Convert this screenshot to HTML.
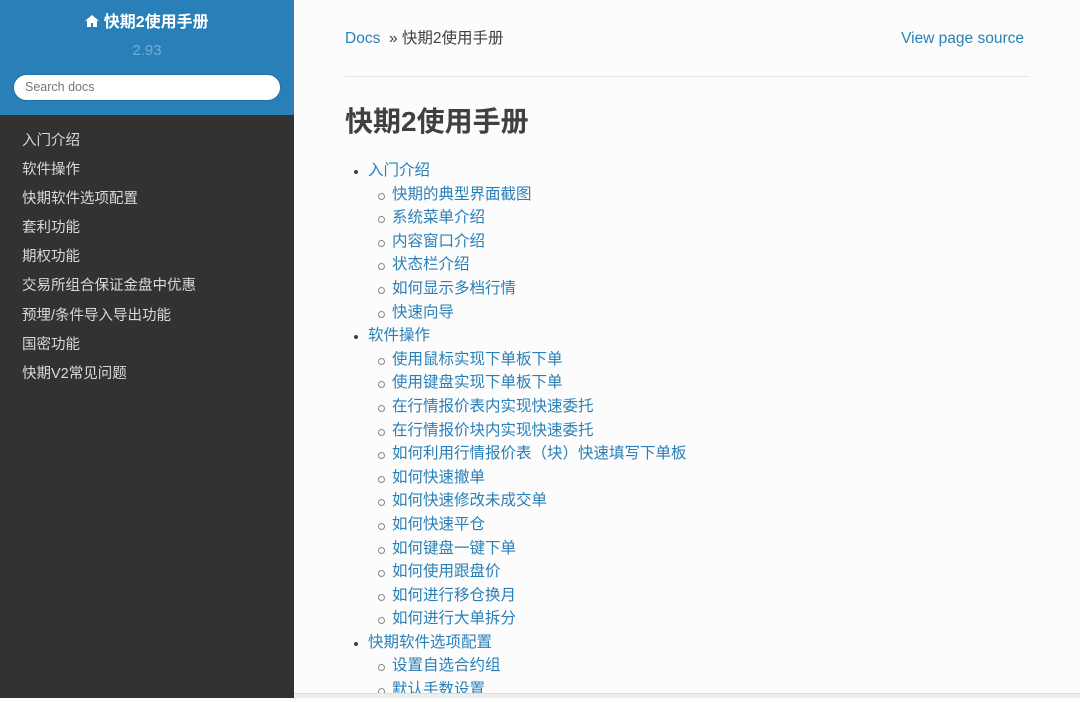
<!DOCTYPE html>
<html><head><meta charset="utf-8"><style>
*{margin:0;padding:0;box-sizing:border-box}
body{width:1080px;height:698px;overflow:hidden;background:#fcfcfc;font-family:"Liberation Sans","Noto Sans CJK SC",sans-serif;position:relative}
.side{position:absolute;left:0;top:0;width:294px;height:698px;background:#343131}
.top{height:115px;background:#2980b9;text-align:center;padding-top:12px}
.top .t{color:#fff;font-weight:bold;font-size:16px;line-height:22px}
.top .v{color:rgba(255,255,255,.35);font-size:15px;margin-top:8px;line-height:18px}
.search{margin:14px 13px 0;height:27px;border-radius:14px;background:#fff;border:1px solid #2472a4;text-align:left;padding-left:11px;font-size:12.5px;color:#777;line-height:25px}
.nav{padding-top:14px}
.nav div{color:#d9d9d9;font-size:14.5px;padding-left:22px;height:29.1px;line-height:24px}
.main{position:absolute;left:345px;top:0;width:684px}
.bc{position:absolute;top:29px;font-size:15.5px;line-height:20px;color:#404040;width:684px}
.bc a{color:#2980b9;text-decoration:none}
.bc .r{position:absolute;right:5px;top:0}
hr{position:absolute;top:76px;left:0;width:684px;border:0;border-top:1px solid #e1e4e5}
h1{position:absolute;top:105px;font-size:28px;line-height:34px;color:#404040;font-weight:bold}
ul{position:absolute;top:159px;left:0;list-style:none;font-size:15.5px;line-height:23.6px}
li{color:#2980b9;position:relative;padding-left:23px}
li.l1::before{content:"";position:absolute;left:9px;top:11px;width:4px;height:4px;border-radius:50%;background:#404040}
li.l2{padding-left:47px}
li.l2::before{content:"";position:absolute;left:33px;top:10px;width:5px;height:5px;border-radius:50%;border:1px solid #888}
.bot{position:absolute;left:294px;right:0;top:693px;height:5px;background:#eee;border-top:1px solid #ddd}
</style></head><body>
<div class="side">
<div class="top"><div class="t"><svg width="14" height="12" viewBox="0 0 14 12" style="vertical-align:0"><path d="M7 0L0 6h2v6h4V8h2v4h4V6h2z" fill="#fff"/></svg> 快期2使用手册</div>
<div class="v">2.93</div>
<div class="search">Search docs</div></div>
<div class="nav">
<div>入门介绍</div><div>软件操作</div><div>快期软件选项配置</div><div>套利功能</div><div>期权功能</div><div>交易所组合保证金盘中优惠</div><div>预埋/条件导入导出功能</div><div>国密功能</div><div>快期V2常见问题</div>
</div></div>
<div class="main">
<div class="bc"><a>Docs</a> &nbsp;» 快期2使用手册<a class="r">View page source</a></div>
<hr>
<h1>快期2使用手册</h1>
<ul>
<li class="l1">入门介绍</li>
<li class="l2">快期的典型界面截图</li>
<li class="l2">系统菜单介绍</li>
<li class="l2">内容窗口介绍</li>
<li class="l2">状态栏介绍</li>
<li class="l2">如何显示多档行情</li>
<li class="l2">快速向导</li>
<li class="l1">软件操作</li>
<li class="l2">使用鼠标实现下单板下单</li>
<li class="l2">使用键盘实现下单板下单</li>
<li class="l2">在行情报价表内实现快速委托</li>
<li class="l2">在行情报价块内实现快速委托</li>
<li class="l2">如何利用行情报价表（块）快速填写下单板</li>
<li class="l2">如何快速撤单</li>
<li class="l2">如何快速修改未成交单</li>
<li class="l2">如何快速平仓</li>
<li class="l2">如何键盘一键下单</li>
<li class="l2">如何使用跟盘价</li>
<li class="l2">如何进行移仓换月</li>
<li class="l2">如何进行大单拆分</li>
<li class="l1">快期软件选项配置</li>
<li class="l2">设置自选合约组</li>
<li class="l2">默认手数设置</li>
</ul>
</div>
<div class="bot"></div>
</body></html>
